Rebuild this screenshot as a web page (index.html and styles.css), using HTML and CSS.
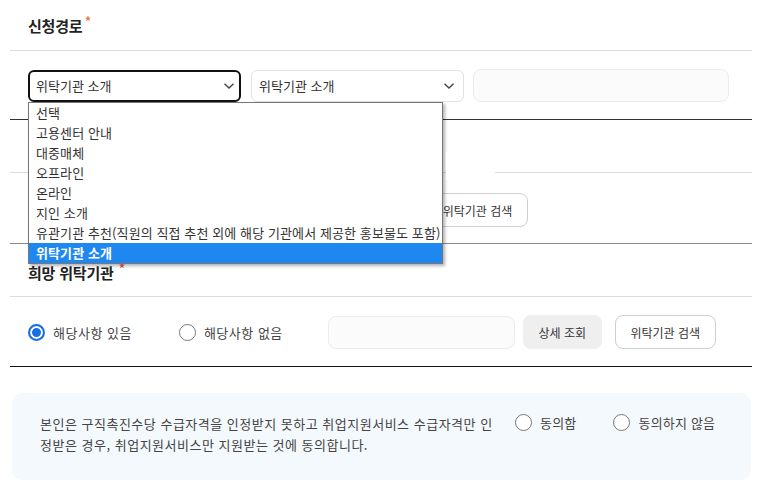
FILE: index.html
```html
<!DOCTYPE html>
<html lang="ko">
<head>
<meta charset="utf-8">
<title>신청경로</title>
<link rel="stylesheet" href="styles.css">
</head>
<body>
<div class="page">
  <div class="sec-title first"><h2>신청경로<span class="req">*</span></h2></div>
  <div class="row row-dark">
    <div class="select active"><span>위탁기관 소개</span><svg class="chev" viewBox="0 0 12 8"><path d="M1.5 1.8 6 6 10.5 1.8" /></svg></div>
    <div class="select"><span>위탁기관 소개</span><svg class="chev" viewBox="0 0 12 8"><path d="M1.5 1.8 6 6 10.5 1.8" /></svg></div>
    <div class="field wide"></div>
  </div>
  <div class="sec-title hidden-title"></div>
  <div class="row row-mid">
    <div class="spacer"></div>
    <button class="btn outline">위탁기관 검색</button>
  </div>
  <div class="sec-title second"><h2>희망 위탁기관<span class="req red">*</span></h2></div>
  <div class="row row-black">
    <label class="radio"><span class="dot on"></span>해당사항 있음</label>
    <label class="radio r2"><span class="dot"></span>해당사항 없음</label>
    <div class="field mid"></div>
    <button class="btn grey">상세 조회</button>
    <button class="btn outline">위탁기관 검색</button>
  </div>
  <div class="notice">
    <p>본인은 구직촉진수당 수급자격을 인정받지 못하고 취업지원서비스 수급자격만 인<br>정받은 경우, 취업지원서비스만 지원받는 것에 동의합니다.</p>
    <div class="agree">
      <label class="radio"><span class="dot"></span>동의함</label>
      <label class="radio r3"><span class="dot"></span>동의하지 않음</label>
    </div>
  </div>

  <ul class="dropdown">
    <li>선택</li>
    <li>고용센터 안내</li>
    <li>대중매체</li>
    <li>오프라인</li>
    <li>온라인</li>
    <li>지인 소개</li>
    <li>유관기관 추천(직원의 직접 추천 외에 해당 기관에서 제공한 홍보물도 포함)</li>
    <li class="sel">위탁기관 소개</li>
  </ul>
  <div class="patch"></div>
</div>
</body>
</html>
```
FILE: styles.css
```css
* { box-sizing: border-box; }
html, body { margin: 0; padding: 0; background: #fff; }
body {
  font-family: "Noto Sans CJK KR", "Noto Sans", sans-serif;
  color: #333;
  width: 773px;
  height: 488px;
  overflow: hidden;
}
.page {
  position: relative;
  margin-left: 10px;
  width: 742px;
}
.sec-title {
  border-bottom: 1px solid #dcdcdc;
  padding-left: 18px;
}
.sec-title h2 {
  margin: 0;
  font-size: 15px;
  font-weight: 700;
  color: #222;
  line-height: 20px;
  letter-spacing: -0.2px;
}
.sec-title.first { height: 51px; padding-top: 12px; }
.sec-title.hidden-title { height: 53px; }
.sec-title.second { height: 53px; padding-top: 15px; }
.req {
  color: #e0763a;
  font-size: 15px;
  vertical-align: 4px;
  margin-left: 2px;
  font-weight: 400;
}
.req.red { color: #e4513a; margin-left: 5px; }

.row {
  display: flex;
  align-items: center;
  padding-left: 18px;
}
.row-dark { height: 69px; padding-top: 1px; border-bottom: 1px solid #333; }
.row-mid { height: 71px; border-bottom: 1px solid #8a8a8a; padding-top: 4px; }
.row-black { height: 70px; border-bottom: 1px solid #111; padding-top: 1px; }

.select {
  width: 213px;
  height: 32px;
  border: 1px solid #e2e2e2;
  border-radius: 6px;
  display: flex;
  align-items: center;
  justify-content: space-between;
  padding: 0 8px 0 7px;
  font-size: 13px;
  color: #333;
  margin-right: 10px;
  background: #fff;
}
.select.active {
  border: 2px solid #111;
  padding-left: 6px;
  padding-right: 4px;
}
.chev { width: 12px; height: 8px; fill: none; stroke: #444; stroke-width: 1.4; }
.field {
  height: 33px;
  border: 1px solid #ececec;
  border-radius: 8px;
  background: #fbfbfb;
}
.field.wide { width: 256px; margin-left: -1px; }
.field.mid { width: 187px; margin-right: 8px; }
.spacer { width: 399px; }

.btn {
  font-family: inherit;
  font-size: 12px;
  color: #333;
  height: 34px;
  border-radius: 8px;
  padding: 0;
  cursor: pointer;
}
.btn.outline { width: 101px; background: #fff; border: 1px solid #cfcfcf; }
.btn.grey { width: 79px; background: #efefef; border: 0; margin-right: 13px; }

.radio {
  display: flex;
  align-items: center;
  font-size: 13px;
  color: #444;
  letter-spacing: 0.5px;
}
.radio.r2 { margin-left: 47px; margin-right: 45px; }
.dot {
  width: 17px;
  height: 17px;
  border-radius: 50%;
  border: 1px solid #777;
  background: #fff;
  margin-right: 8px;
  flex: none;
}
.dot.on {
  border: 2px solid #1a6fe0;
  box-shadow: inset 0 0 0 2px #fff, inset 0 0 0 8px #1a6fe0;
}

.notice {
  margin: 26px 0 0 2px;
  width: 739px;
  height: 87px;
  background: #f4f9fd;
  border-radius: 10px;
  display: flex;
  align-items: flex-start;
  padding: 20px 0 0 28px;
}
.notice p {
  margin: 0;
  font-size: 13px;
  line-height: 21px;
  letter-spacing: 0.5px;
  color: #444;
  width: 470px;
  flex: none;
}
.agree { display: flex; margin-left: 5px; margin-top: 0; }
.agree .radio { letter-spacing: 0.2px; }
.agree .r3 { margin-left: 37px; }

.dropdown {
  position: absolute;
  left: 18px;
  top: 102px;
  width: 415px;
  margin: 0;
  padding: 0;
  list-style: none;
  background: #fff;
  border: 1px solid #777;
  box-shadow: 2px 2px 3px rgba(0,0,0,0.3);
}
.dropdown li {
  height: 20px;
  line-height: 20px;
  font-size: 13px;
  padding-left: 7px;
  color: #333;
  white-space: nowrap;
  letter-spacing: 0.1px;
}
.dropdown li.sel {
  background: #1e88f0;
  color: #fff;
  font-weight: 700;
}
.patch {
  position: absolute;
  left: 436px;
  top: 152px;
  width: 49px;
  height: 28px;
  background: #fff;
}
```
